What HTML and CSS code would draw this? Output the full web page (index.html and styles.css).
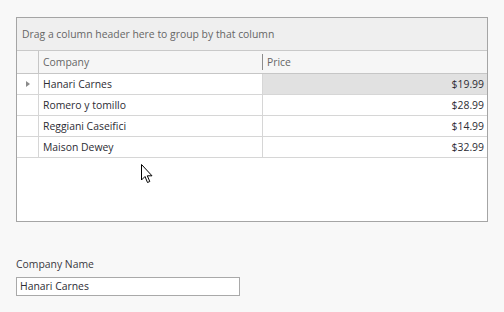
FILE: index.html
```html
<!DOCTYPE html>
<html lang="en">
  <head>
    <meta charset="UTF-8" />
    <title>Grid</title>
    <link rel="stylesheet" href="styles.css">
  </head>
  <body>
    <div class="grid">
      <div class="group-panel">Drag a column header here to group by that column</div>
      <div class="row header">
        <div class="indicator"></div>
        <div class="cell company">Company</div>
        <div class="cell price">Price</div>
      </div>
      <div class="row">
        <div class="indicator"><span class="arrow"></span></div>
        <div class="cell company">Hanari Carnes</div>
        <div class="cell price num focused">$19.99</div>
      </div>
      <div class="row">
        <div class="indicator"></div>
        <div class="cell company">Romero y tomillo</div>
        <div class="cell price num">$28.99</div>
      </div>
      <div class="row">
        <div class="indicator"></div>
        <div class="cell company">Reggiani Caseifici</div>
        <div class="cell price num">$14.99</div>
      </div>
      <div class="row">
        <div class="indicator"></div>
        <div class="cell company">Maison Dewey</div>
        <div class="cell price num">$32.99</div>
      </div>
      <svg class="cursor" width="13" height="20" viewBox="0 0 13 20">
        <path d="M0.5 0.5 L0.5 16 L4 12.5 L6.5 18.5 L8.8 17.5 L6.3 11.8 L11 11.8 Z" fill="#fff" stroke="#000" stroke-width="1" stroke-linejoin="miter" />
      </svg>
    </div>

    <div class="editor">
      <label class="label">Company Name</label>
      <div class="input">Hanari Carnes</div>
    </div>
  </body>
</html>
```
FILE: styles.css
```css
body {
  margin: 0;
  padding: 17px 16px 0;
  background-color: #f8f8f8;
  font-family: "Open Sans", "DejaVu Sans", sans-serif;
  font-size: 10.4px;
  color: #2c2c34;
}
.grid {
  position: relative;
  width: 470px;
  height: 203px;
  border: 1px solid #a5a5a5;
  background-color: #fff;
}
.group-panel {
  height: 32px;
  line-height: 32px;
  padding-left: 5px;
  background-color: #efefef;
  border-bottom: 1px solid #c9c9c9;
  color: #666;
}
.row {
  display: flex;
  height: 20px;
  line-height: 20px;
  border-bottom: 1px solid #d6d6d6;
  width: 470px;
}
.row.header {
  height: 22px;
  line-height: 22px;
  background-color: #f6f6f6;
  border-bottom: 1px solid #c6c6c6;
  color: #666;
}
.indicator {
  width: 22px;
  border-right: 1px solid #d6d6d6;
  background-color: #fff;
  display: flex;
  align-items: center;
  padding-left: 9px;
  box-sizing: border-box;
}
.header .indicator {
  background-color: #f6f6f6;
  border-right-color: #c6c6c6;
}
.arrow {
  width: 0;
  height: 0;
  border-top: 3.5px solid transparent;
  border-bottom: 3.5px solid transparent;
  border-left: 4px solid #8a8a8a;
}
.cell {
  box-sizing: border-box;
  padding: 0 4px;
  white-space: nowrap;
}
.company {
  width: 224px;
  border-right: 1px solid #d6d6d6;
}
.header .company {
  border-right: none;
}
.header .price {
  position: relative;
}
.header .price::before {
  content: "";
  position: absolute;
  left: -1px;
  top: 3px;
  bottom: 3px;
  border-left: 1px solid #8c8c8c;
}
.price {
  flex: 1;
}
.num {
  text-align: right;
  padding-right: 3px;
}
.focused {
  background-color: #e1e1e1;
}
.cursor {
  position: absolute;
  left: 124px;
  top: 146px;
}
.editor {
  margin-top: 34px;
}
.label {
  display: block;
  color: #38383f;
  line-height: 16px;
}
.input {
  margin-top: 5px;
  padding-left: 3px;
  box-sizing: border-box;
  width: 224px;
  height: 19px;
  line-height: 17px;
  border: 1px solid #a9a9a9;
  background-color: #fff;
}
```
